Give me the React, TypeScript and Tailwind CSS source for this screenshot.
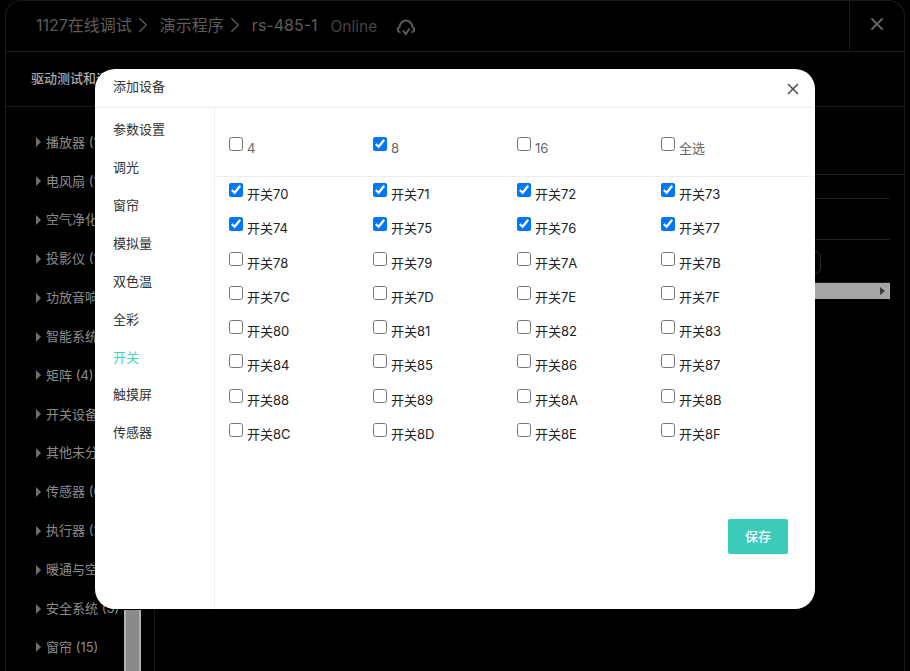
import { X, ChevronRight } from "lucide-react";

const FONT = "font-['Inter','Noto_Sans_CJK_SC',sans-serif]";

const sideItems = [
  "播放器 (1)",
  "电风扇 (1)",
  "空气净化器 (1)",
  "投影仪 (1)",
  "功放音响 (2)",
  "智能系统 (1)",
  "矩阵 (4)",
  "开关设备 (8)",
  "其他未分类 (3)",
  "传感器 (6)",
  "执行器 (2)",
  "暖通与空调 (4)",
  "安全系统 (3)",
  "窗帘 (15)",
];

const navItems = ["参数设置", "调光", "窗帘", "模拟量", "双色温", "全彩", "开关", "触摸屏", "传感器"];

const switches = [
  "70", "71", "72", "73", "74", "75", "76", "77",
  "78", "79", "7A", "7B", "7C", "7D", "7E", "7F",
  "80", "81", "82", "83", "84", "85", "86", "87",
  "88", "89", "8A", "8B", "8C", "8D", "8E", "8F",
];
const checkedSwitches = ["70", "71", "72", "73", "74", "75", "76", "77"];

function CloudIcon() {
  return (
    <svg width="20" height="18" viewBox="0 0 20 18" fill="none" stroke="#5c5c5c" strokeWidth="2">
      <path d="M4.5 13.5 C1.5 13 0.8 9.5 3.5 8 C4 4 7 1.5 10 1.5 C13 1.5 16 4 16.5 8 C19.2 9.5 18.5 13 15.5 13.5" />
      <path d="M7 11.5 L9.7 15 L13.5 9.5" />
    </svg>
  );
}

function Crumb({ text }: { text: string }) {
  return (
    <div className="flex items-center">
      <span>{text}</span>
      <ChevronRight size={26} strokeWidth={1.2} className="ml-[-2px] mr-[4px] text-[#5c5c5c]" />
    </div>
  );
}

function Check({ label, checked, dim }: { label: string; checked?: boolean; dim?: boolean }) {
  return (
    <label className={`flex items-start ${dim ? "text-[#666]" : "text-[#222]"}`}>
      <input type="checkbox" defaultChecked={checked} className="w-[14px] h-[14px] m-0 mt-px shrink-0" />
      <span className="ml-[4px] mt-[4px] text-[13px] leading-[16px]">{label}</span>
    </label>
  );
}

function Modal() {
  return (
    <div className="absolute left-[95px] top-[69px] w-[720px] h-[540px] bg-white rounded-[20px] flex flex-col overflow-hidden">
      <div className="h-[39px] shrink-0 border-b border-[#eeeeee] pl-[18px] pr-[13px] flex items-center justify-between">
        <span className="text-[13px] text-[#333] mb-[2px]">添加设备</span>
        <X size={18} strokeWidth={2.2} className="text-[#555] mt-[2px]" />
      </div>
      <div className="flex flex-1 min-h-0">
        <div className="w-[120px] shrink-0 border-r border-[#eeeeee] pt-[3px]">
          {navItems.map((item) => (
            <div
              key={item}
              className={`h-[37.9px] pl-[18px] flex items-center text-[13px] ${item === "开关" ? "text-[#45d4c0]" : "text-[#333]"}`}
            >
              {item}
            </div>
          ))}
        </div>
        <div className="flex-1 relative">
          <div className="h-[69px] pl-[14px] pt-[28px] border-b border-[#eeeeee] grid grid-cols-[144px_144px_144px_144px]">
            <Check label="4" dim />
            <Check label="8" checked dim />
            <Check label="16" dim />
            <Check label="全选" dim />
          </div>
          <div className="pl-[14px] pt-[5px] grid grid-cols-[144px_144px_144px_144px] auto-rows-[34.3px]">
            {switches.map((s) => (
              <Check key={s} label={`开关${s}`} checked={checkedSwitches.includes(s)} />
            ))}
          </div>
          <button className="absolute right-[27px] bottom-[55px] w-[60px] h-[35px] bg-[#3ccbba] text-white text-[13px] font-medium rounded-[2px]">
            保存
          </button>
        </div>
      </div>
    </div>
  );
}

export default function App() {
  return (
    <div className={`relative h-[671px] w-[910px] overflow-hidden bg-black ${FONT}`}>
      <div className="ml-[5px] w-[900px] h-[671px] border-x border-t border-[#1a1a1a] rounded-t-[16px] flex flex-col">
        <div className="h-[51px] shrink-0 border-b border-[#1c1c1c] flex items-center">
          <div className="flex-1 pl-[30px] pb-[2px] flex items-center text-[16px] text-[#5c5c5c]">
            <Crumb text="1127在线调试" />
            <Crumb text="演示程序" />
            <span>rs-485-1</span>
            <span className="ml-[13px] mt-[3px] text-[15.5px] text-[#444]">Online</span>
            <div className="ml-[19px] mt-[5px]">
              <CloudIcon />
            </div>
          </div>
          <div className="w-[55px] h-full border-l border-[#1c1c1c] flex items-center justify-center">
            <X size={20} strokeWidth={2.2} className="text-[#666] mb-[4px]" />
          </div>
        </div>
        <div className="h-[55px] shrink-0 border-b border-[#1c1c1c] pl-[25px] flex items-center">
          <span className="text-[13px] font-medium text-[#a8a8a8]">驱动测试和调试</span>
        </div>
        <div className="flex flex-1 min-h-0">
          <div className="w-[149px] shrink-0 border-r border-[#1a1a1a] relative pt-[16px] pl-[30px]">
            {sideItems.map((item) => (
              <div key={item} className="h-[38.85px] flex items-center text-[13px] text-[#8c8c8c] whitespace-nowrap">
                <span className="w-0 h-0 border-y-[5px] border-y-transparent border-l-[5px] border-l-[#6e6e6e] mr-[5px]" />
                {item}
              </div>
            ))}
            <div className="absolute left-[118px] top-[503px] w-[17px] h-[62px] bg-[#8a8a8a] border-x-[2px] border-[#b0b0b0]" />
          </div>
          <div className="flex-1 min-w-0 pr-[14px]">
            <div className="h-[68px] border-b border-[#1c1c1c] -mr-[14px]" />
            <div className="h-[24px] border-b border-[#1c1c1c]" />
            <div className="h-[41px] border-b border-[#1c1c1c]" />
            <div className="h-[42px] relative">
              <div className="absolute left-[599px] top-[11px] w-[67px] h-[23px] rounded-[6px] border border-[#2a2a2a]" />
            </div>
            <div className="h-[17px] bg-[#a6a6a6] flex items-center justify-end pr-[5px] border-t border-[#1c1c1c]">
              <span className="w-0 h-0 border-y-[4px] border-y-transparent border-l-[5px] border-l-[#3c3c3c]" />
            </div>
          </div>
        </div>
      </div>
      <Modal />
    </div>
  );
}
